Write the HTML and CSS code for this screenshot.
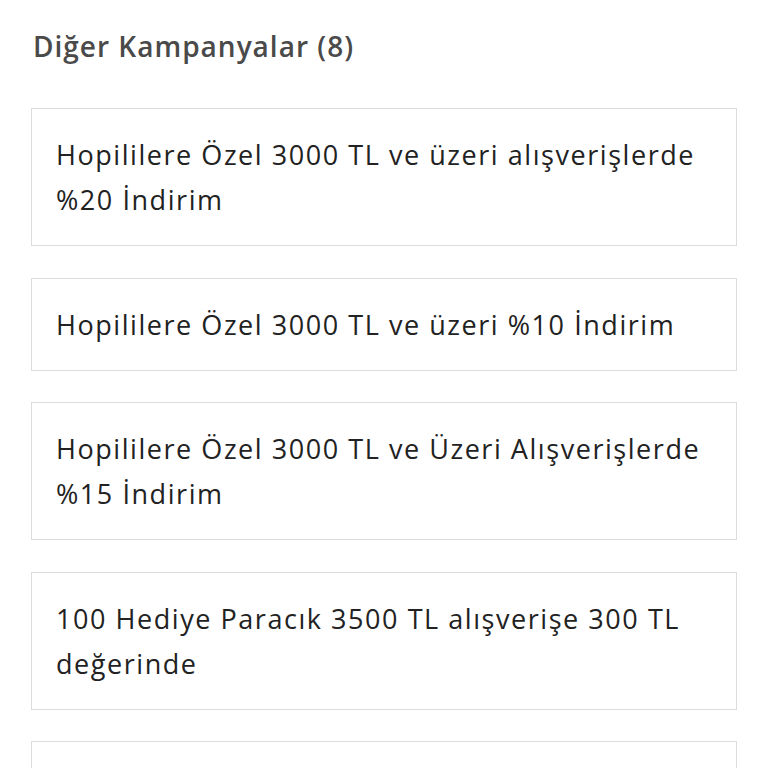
FILE: index.html
```html
<!DOCTYPE html>
<html lang="tr">
<head>
<meta charset="utf-8">
<link rel="stylesheet" href="styles.css">
</head>
<body>
<div class="page">
  <h2 class="title">Diğer Kampanyalar (8)</h2>
  <div class="list">
    <div class="card">Hopililere Özel 3000 TL ve üzeri alışverişlerde %20 İndirim</div>
    <div class="card">Hopililere Özel 3000 TL ve üzeri %10 İndirim</div>
    <div class="card">Hopililere Özel 3000 TL ve Üzeri Alışverişlerde %15 İndirim</div>
    <div class="card">100 Hediye Paracık 3500 TL alışverişe 300 TL değerinde</div>
    <div class="card">Hopililere Özel 3000 TL ve üzeri alışverişlerde %20 İndirim</div>
  </div>
</div>
</body>
</html>
```
FILE: styles.css
```css
html, body {
  margin: 0;
  padding: 0;
  background: #ffffff;
}
.page {
  padding: 24px 31px 0 31px;
  width: 706px;
}
.title {
  margin: 0 0 0 2px;
  font-family: "Open Sans", sans-serif;
  font-weight: 600;
  font-size: 28px;
  letter-spacing: 1px;
  line-height: 44px;
  color: #4a4a4a;
}
.list {
  margin-top: 40px;
  display: flex;
  flex-direction: column;
  gap: 31.5px;
}
.card {
  border: 1px solid #dcdcdc;
  padding: 23px 24px;
  font-family: "Open Sans", sans-serif;
  font-size: 27px;
  letter-spacing: 1.55px;
  line-height: 45px;
  color: #222222;
}
```
